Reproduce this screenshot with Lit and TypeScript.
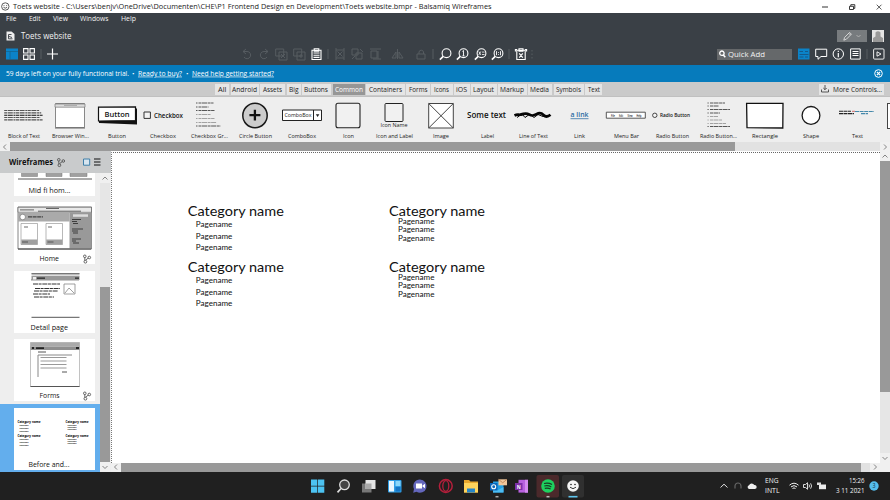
import { LitElement, html, svg, css } from "lit";
import { customElement } from "lit/decorators.js";

// Single line of text set to an exact width.
const line = (s: string, w: number, size: number, cls = "") => html`<svg class="line ${cls}" width=${w} height=${Math.ceil(size * 1.3)}><text x="0" y=${size} font-size=${size} textLength=${w} lengthAdjust="spacingAndGlyphs">${s}</text></svg>`;

const st = (s: string, x: number, y: number, w: number, size: number, fill = "#111", extra = "") =>
  svg`<text class=${extra} x=${x} y=${y} font-size=${size} textLength=${w} lengthAdjust="spacingAndGlyphs" fill=${fill}>${s}</text>`;

const icon = (w: number, h: number, body: unknown, cls = "") => html`<svg class="ic ${cls}" width=${w} height=${h} viewBox="0 0 ${w} ${h}">${body}</svg>`;

const TABS: [string, number, number, number][] = [
  ["All", 214.5, 14.5, 8.5], ["Android", 230.5, 28, 25], ["Assets", 260, 25, 19], ["Big", 286.5, 14, 9.5],
  ["Buttons", 301.5, 29.5, 24], ["Common", 333, 31.5, 28], ["Containers", 366, 39, 33], ["Forms", 406, 24, 18.5],
  ["Icons", 431, 21.5, 15], ["iOS", 453.5, 16, 11], ["Layout", 470.5, 26.5, 21], ["Markup", 498, 28.5, 24],
  ["Media", 527.5, 24.5, 19], ["Symbols", 553.5, 30, 25], ["Text", 585, 17, 12],
];

const magnifier = (inner: unknown) => svg`<circle cx="7.5" cy="5.2" r="4.4" fill="none" stroke="#fff" stroke-width="1.1"/><path d="M4.2 8.4L.9 11.6" stroke="#fff" stroke-width="1.6"/>${inner}`;

// Top bar tools: left edge, width, drawing, dimmed flag
const TOOLS: [number, number, unknown, boolean][] = [
  [241, 11, svg`<path d="M5 1L2 3.5L5 6M2 3.5H6A3.6 3.6 0 1 1 3 9" />`, true],
  [259, 11, svg`<path d="M6 1L9 3.5L6 6M9 3.5H5A3.6 3.6 0 1 0 8 9"/>`, true],
  [275, 13, svg`<path d="M.7 1h8v7h-8zM4 4h8v8h-8zM6 6l4 4M10 6l-4 4"/>`, true],
  [293, 13, svg`<path d="M.7 1h8v7h-8zM4 4h8v8h-8zM6 8h4M8 6v4"/>`, true],
  [310.5, 11, svg`<path d="M1 2.2h9v9.3h-9zM3.2 .8h4.6v2.4h-4.6zM2.5 5h6M2.5 7.2h6M2.5 9.4h6" stroke-width="1.1"/>`, false],
  [327, 2, svg`<path d="M1 1v10"/>`, true],
  [334, 12, svg`<path d="M1 1h2M9 1h2M1 11h2M9 11h2M2 2h8v8h-8zM3.5 3.5l5 5M8.5 3.5l-5 5"/>`, true],
  [351, 13, svg`<path d="M1 1h6v6h-6zM5 5h6v6h-6zM1 11l3-3M9 1l3 3"/>`, true],
  [369, 13, svg`<path d="M1 1h11M2 3h6v7h-6zM9 3v8M4 11h8"/>`, true],
  [391, 13, svg`<path d="M6.5 1v10M1 10l4-6v6zM12 10l-4-6v6z"/>`, true],
  [415, 12, svg`<path d="M2 6h8v5h-8zM4 6v-2a2.3 2.3 0 0 1 4.5 0v2"/>`, true],
  [432, 2, svg`<path d="M1 1v10"/>`, true],
  [438.5, 13, magnifier(""), false],
  [456, 13, magnifier(svg`<path d="M7.5 2.5v5.4M6.4 3.4l1.1-.9M6.4 7.9h2.2" stroke-width=".9"/>`), false],
  [473.5, 13, magnifier(svg`<path d="M4.8 3.5l2 3.4M6.8 3.5l-2 3.4M8 6.5h2.5M8 4.1h2.5" stroke-width=".8"/>`), false],
  [490.5, 13, magnifier(svg`<path d="M5.5 3.2v4M9.5 3.2v4M7.5 4v.8M7.5 6v.8" stroke-width=".9"/>`), false],
  [508, 2, svg`<path d="M1 1v10"/>`, true],
  [515, 12, svg`<path d="M1.8 2.2h8.400v9.3h-8.400zM4 .8h4v2.4h-4zM.4 3.500v-2h1.600M11.6 3.500v-2h-1.600M4.200 5.400l3.600 4.2M7.800 5.400l-3.600 4.2" stroke-width="1.1"/>`, false],
  [531, 3, svg`<path d="M1 2v9" stroke-dasharray="1.5 2"/>`, true],
];

const rows = (n: number, x: number, y: number, step: number, w: number[]) =>
  Array.from({ length: n }, (_, i) => svg`<path d="M${x} ${y + i * step}h${w[i % w.length]}" stroke=${i === 2 ? "#111" : "#555"} stroke-width="1.1" stroke-dasharray="3 .6 5 .7 2 .5"/>`);

// Each control is drawn in a 46 x 34 box centred on x = 23; y = 0 is the top of the palette.
const CONTROLS: [string, number, unknown][] = [
  ["Block of Text", 32, svg`${rows(5, 3.2, 13.5, 2.35, [35, 37, 39, 36, 39])}`],
  ["Browser Win...", 37, svg`<path d="M8.5 6.5h29v24h-29z" fill="#fff" stroke="#888"/><path d="M8 7h30v3.2h-30z" fill="#ddd" stroke="#777" stroke-width=".7"/><path d="M8 31h30" stroke="#666"/><path d="M17 8.4h13" stroke="#999" stroke-width=".8"/>`],
  ["Button", 18, svg`<path d="M5 26l38 1.5V12l-2-2-37 .5z" fill="#111"/><path d="M4.5 10.2l37-.4v13.8l-37 .4z" fill="#fff" stroke="#111" stroke-width="1.2"/>${st("Button", 10.5, 19.8, 25, 7.8, "#111", "med")}`],
  ["Checkbox", 26, svg`<path d="M4 15h6.4v6.4h-6.4z" fill="#f4f4f4" stroke="#333" stroke-width="1"/>${st("Checkbox", 14, 20.6, 29, 6.3, "#111", "med")}`],
  ["Checkbox Gr...", 37, svg`${[6, 10, 13.5, 17.5, 21.5, 25.5, 29].map((y, i) => svg`<path d="M10 ${y}h1.5M12.5 ${y}h${[15, 10, 16, 12, 16, 18, 22][i]}" stroke=${i > 2 && i < 6 ? "#999" : "#444"} stroke-width=".9" stroke-dasharray="3 .5 5 .6"/>`)}`],
  ["Circle Button", 33, svg`<circle cx="23" cy="18.5" r="12.2" fill="#ccc" stroke="#181818" stroke-width="1.5"/><path d="M17.4 18.2h11M22.900 12.8v10.8" stroke="#111" stroke-width="2.3"/>`],
  ["ComboBox", 28, svg`<path d="M3.5 13h39v10.5h-39zM34.5 13v10.5" fill="#fff" stroke="#222"/>${st("ComboBox", 5.5, 20, 27, 5.5, "#222")}<path d="M36.8 17.2h3.6l-1.8 2.8z" fill="#222"/>`],
  ["Icon", 11, svg`<rect x="11" y="6.3" width="24" height="24.4" rx="2" fill="#f1f1f1" stroke="#222" stroke-width="1.1"/>`],
  ["Icon and Label", 37, svg`<rect x="14" y="6.5" width="18" height="18" rx="1" fill="#f1f1f1" stroke="#222"/>${st("Icon Name", 9.5, 30, 27, 5.4, "#222")}`],
  ["Image", 16, svg`<path d="M10.7 6.5h24.6v24.5h-24.6zM10.7 6.5l24.6 24.5M35.3 6.5l-24.6 24.5" fill="#fff" stroke="#444"/>`],
  ["Label", 13, svg`${st("Some text", 3, 20.6, 39, 8, "#111", "med")}`],
  ["Line of Text", 29, svg`<path d="M4.5 18.500q2-1 4-.8t5-.8 6 .8 7-.5 7 .8 7-.3" fill="none" stroke="#050505" stroke-width="2.700"/><path d="M7 20.500l5-3.500 3 3.500 5-3.500 4 3.500 4-3 5 2 6-1" stroke="#050505" fill="none"/>`],
  ["Link", 11, svg`${st("a link", 13.5, 20.4, 18, 7.5, "#2c6ca3", "und med")}`],
  ["Menu Bar", 25, svg`<path d="M3.3 15.2h39v6h-39z" fill="#fff" stroke="#444" stroke-width=".9"/>${st("File", 8, 19.5, 4, 3.4, "#111", "med")}${st("Edit", 16, 19.5, 4, 3.4, "#111", "med")}${st("View", 24.5, 19.5, 5, 3.4, "#111", "med")}${st("Help", 33.5, 19.5, 5, 3.4, "#111", "med")}`],
  ["Radio Button", 33, svg`<circle cx="5.8" cy="18.3" r="2.2" fill="#f4f4f4" stroke="#333" stroke-width=".9"/>${st("Radio Button", 11, 20.4, 30, 5.5, "#111", "med")}`],
  ["Radio Button...", 37, svg`${[6, 9, 12.5, 16, 19.5, 23, 26.5, 29.5].map((y, i) => svg`<path d="M11.5 ${y}h1.2M14 ${y}h${[15, 9, 20, 10, 8, 12, 16, 20][i]}" stroke=${i > 3 && i < 7 ? "#999" : "#444"} stroke-width=".9" stroke-dasharray="3 .5 5 .6"/>`)}`],
  ["Rectangle", 26, svg`<path d="M4.6 6.4l36.4-.1-.2 24.7-35.8-.3z" fill="#fff" stroke="#111" stroke-width="1.3"/>`],
  ["Shape", 16, svg`<circle cx="23" cy="18.4" r="8.9" fill="#fff" stroke="#181818" stroke-width="1.3"/>`],
  ["Text", 11, svg`<path d="M4 14.3h12M4 16.6h15" stroke="#222" stroke-width="1.1" stroke-dasharray="4 .5"/><path d="M17 14.3h3" stroke="#c66" stroke-width="1"/><path d="M20 14.5h19M26 16.6h7" stroke="#48a" stroke-width="1.1" stroke-dasharray="4 .6"/>`],
];

const prototype = svg`<g fill="none" stroke="#444" stroke-width=".8"><circle cx="1.8" cy="1.8" r="1.3"/><circle cx="6.3" cy="3" r="1.3"/><circle cx="2.4" cy="7.2" r="1.4"/><path d="M1.8 3.1v2.8M2.6 5.6l2.7-2"/></g>`;

const PAGES: { name: string; x: number; w: number; linked?: boolean; picked?: boolean; art: unknown }[] = [
  { name: "Mid fi hom...", x: 14.5, w: 42, art: svg`<path d="M4 45h74" stroke="#444" stroke-width=".9"/><path d="M7.5 36h16v6.500h-16zM32 36h16v6.500h-16zM56 36h17v6.500h-17z" fill="#a0a0a0" stroke="#777" stroke-width=".5"/>` },
  {
    name: "Home", x: 25.5, w: 19.5, linked: true, art: svg`<path d="M4 5h73.5v42H4z" fill="#fff" stroke="#666" stroke-width=".8"/><path d="M4 5.3h73.5v5H4z" fill="#e8e8e8" stroke="#555" stroke-width=".6"/><path d="M6 7.9h14M32 6.5h13M24 9.2h43" stroke="#444" stroke-width=".8"/><path d="M4 10.4h51.500v9H4z" fill="#aaa"/><path d="M55.5 10.4h22v36h-22z" fill="#999"/><circle cx="8.7" cy="15" r="2.8" fill="#fff" stroke="#777" stroke-width=".7"/><path d="M14 14.9h15" stroke="#444" stroke-width="1.3" stroke-dasharray="4 .6"/>
      <path d="M7 21.500h16.500v21H7zM32 21.500h16.500v21H32z" fill="#fff" stroke="#888" stroke-width=".6"/><path d="M7.300 37.500h16v5h-16zM32.300 37.500h16v5h-16z" fill="#a0a0a0"/><path d="M8 40h6M33.500 40h6M10 25h4M34 25h4" stroke="#444" stroke-width=".8"/><path d="M59 12.300h15v2.500H59z" fill="#ddd"/><path d="M58 17.500h9M58 19.500h5M58 27h11M58 29h6M58 37h9M58 39h4M59 21.500h5M59 31h5M59 41h6" stroke="#333" stroke-width=".9"/><path d="M4 47h73" stroke="#444"/>`,
  },
  { name: "Detail page", x: 16.5, w: 37.5, art: svg`<path d="M17.500 2.500h48v2h-48z" fill="#bbb"/><path d="M17.500 2.500h48M17 8.900h48" stroke="#777"/><path d="M17.500 5h48v4h-48z" fill="#999"/><path d="M19 6h3v2.500h-3z" fill="#eee"/><path d="M23 7.200h8M61 7.200h4" stroke="#222" stroke-width="1.300"/><path d="M19 13h27M21 17.500h25M20 20h24M19 23h17M20 26h20" stroke="#333" stroke-width="1" stroke-dasharray="5 .6 3 .7"/><path d="M50 13h11v10H50zM51 22l4-5 5 5" fill="#fff" stroke="#777" stroke-width=".7"/><path d="M17.500 46.300h48" stroke="#555"/>` },
  { name: "Forms", x: 25.5, w: 20, linked: true, art: svg`<path d="M16.500 3.500h49v44h-49z" fill="#fff" stroke="#999" stroke-width=".6"/><path d="M16.500 3.500h49v4h-49z" fill="#aaa"/><path d="M16.500 7.500h49v3.500h-49z" fill="#8f8f8f"/><path d="M22 9.200h8M62 9h3M18 9h2" stroke="#222" stroke-width="1.800"/><path d="M24 13h8" stroke="#555"/><path d="M24 38V16h34" fill="none" stroke="#888"/><path d="M26.500 18.500h26M26.500 22h26M26.500 25.500h26M26.500 29h26" stroke="#999"/><path d="M48 33h5M16.500 47.500h49" stroke="#555"/>` },
  {
    name: "Before and...", x: 14.5, w: 41, picked: true, art: svg`${[0, 14].map((dy) => [0, 48].map((dx) => svg`${st("Category name", 3.5 + dx, 15 + dy, 23, 3.2, "#000", "bold")}${[0, 1, 2].map((i) => st("Pagename", 5.5 + dx, (dx ? 17.7 : 18.4) + dy + i * (dx ? 2.3 : 2.8), 9, 1.8, "#111", "bold"))}`))}` },
];

const arrow = (d: string) => html`<span class="arr"><svg width="8" height="8" viewBox="0 0 8 8"><path d=${d} fill="none" stroke="#777" stroke-width=".9"/></svg></span>`;
const UP = "M1.500 5.500L4 3L6.500 5.500", DOWN = "M1.500 3L4 5.500L6.500 3", LEFT = "M5 1.500L2.500 4L5 6.500", RIGHT = "M3 1.500L5.500 4L3 6.500";

@customElement("page-card")
class PageCard extends LitElement {
  static properties = { page: { attribute: false } };
  declare page: (typeof PAGES)[number];
  static styles = css`
    :host { display: block; flex: none; }
    .card { background: #fff; width: 81px; height: 62px; display: block; font-family: "Open Sans", sans-serif; }
    .bold { font-weight: 700; }
  `;
  render() {
    const p = this.page;
    return html`<svg class="card" viewBox="0 0 81 62">${p.art}${st(p.name, p.x, 59, p.w, 7.3)}${p.linked ? svg`<g transform="translate(69 52.500)">${prototype}</g>` : ""}</svg>`;
  }
}

@customElement("app-root")
class AppRoot extends LitElement {
  static styles = css`
    :host { display: flex; flex-direction: column; width: 890px; height: 500px; overflow: hidden; font-family: "Open Sans", "Noto Sans", sans-serif; background: #fff; }
    svg { display: block; flex: none; overflow: visible; }
    .line { fill: currentColor; }
    .med { font-weight: 600; }
    .bold { font-weight: 700; }
    .und { text-decoration: underline; }
    .row { display: flex; align-items: center; }
    .grow { flex: 1; }
    .title { height: 13px; flex: none; color: #222; padding: 0 8px 0 1px; gap: 3px; box-sizing: border-box; }
    .winbtns { gap: 19px; margin-right: -1px; }
    .head { background: #3a4046; color: #f2f2f2; height: 52px; flex: none; }
    .menu { height: 11px; padding-left: 5.500px; gap: 12.500px; }
    .doc { height: 22px; padding: 2px 6px 0 6px; box-sizing: border-box; }
    .doc > .line { margin-left: 6px; }
    .pen { background: #777b7e; width: 30px; height: 12px; display: flex; align-items: center; justify-content: center; gap: 4px; margin-right: 5px; }
    .tools { height: 16px; padding: 0 5.500px 0 6px; }
    .tools .ic { fill: none; stroke: #fff; }
    .tools .dim { stroke: #565c61; }
    .quick { background: #65686a; width: 75px; height: 11px; display: flex; align-items: center; gap: 3px; padding-left: 2px; box-sizing: border-box; margin-right: 6px; }
    .trial { background: #067bbc; color: #fff; height: 17px; flex: none; padding: 0 7px 0 5.500px; }
    .trial .gap { margin: 0 3.700px; }
    .tabs { height: 14px; flex: none; background: #cacaca; padding: 0 6px 0 214.500px; border-bottom: 1px solid #c0c0c0; color: #222; }
    .tab { height: 11px; background: #e5e5e5; display: flex; align-items: center; justify-content: center; }
    .tab.on { background: #969696; color: #fff; }
    .more { width: 65px; gap: 4px; }
    .palette { height: 45px; flex: none; background: #eee; display: grid; grid-template-columns: repeat(19, 46.330px) 9px; padding-left: .7px; overflow: hidden; color: #222; }
    .ctl { display: flex; flex-direction: column; align-items: center; }
    .next { border: 1px solid #444; background: #fff; height: 24px; width: 10px; margin: 6px 0 0 6px; }
    .arr { width: 10px; height: 10px; display: flex; align-items: center; justify-content: center; background: #f0f0f0; flex: none; }
    .hbar { height: 9px; flex: none; display: flex; align-items: center; background: #e2e2e2; overflow: hidden; }
    .thumb { background: #999; }
    .hbar .thumb { height: 9px; }
    .w1 { width: 725px; } .w2 { width: 740px; }
    .main { flex: 1; min-height: 0; display: flex; }
    .side { width: 111px; display: flex; flex-direction: column; background: #eee; overflow: hidden; }
    .sidehead { height: 22px; flex: none; background: #c9cbcc; padding: 0 10px 0 9px; color: #111; }
    .sidebody { flex: 1; min-height: 0; display: flex; }
    .list { width: 100px; display: flex; flex-direction: column; justify-content: flex-end; overflow: hidden; }
    .slot { padding: 3.200px 0 3.200px 14px; }
    .slot.on { background: #63aeed; padding-bottom: 2px; }
    .vbar { width: 10px; display: flex; flex-direction: column; background: #e6e6e6; }
    .t-side { height: 175px; margin-top: 104px; }
    .t-main { height: 231px; }
    .work { flex: 1; display: flex; flex-direction: column; min-width: 0; }
    .stage { flex: 1; min-height: 0; display: flex; }
    .canvas { flex: 1; border-left: 1px dotted #777; border-top: 1px dotted #666; margin-top: 1px; font-family: Lato, "Open Sans", sans-serif; background: #fff; }
    .task { height: 28.500px; flex: none; background: #202020; color: #f2f2f2; padding: 0 11px 0 305px; }
    .app { height: 28px; display: flex; align-items: center; justify-content: center; }
    .stack { display: flex; flex-direction: column; align-items: center; gap: 1px; }
    .end { align-items: flex-end; margin: 0 4.500px 0 10px; }
  `;

  private tools() {
    let pos = 6;
    const at = (x: number, w: number, body: unknown, dim: boolean) => {
      const gap = x - pos;
      pos = x + w;
      return html`<span style="width:${gap}px"></span>${icon(w, 12, body, dim ? "dim" : "")}`;
    };
    return html`
      ${at(6, 12, svg`<path d="M0 .5h12v11h-12z" fill="#0b83c8" stroke="none"/><path d="M0 3.500h12M4 3.500v8" stroke="#14648f" stroke-width=".8"/>`, false)}
      ${at(23, 12, svg`<path d="M.6 .6h4.400v4.400h-4.400zM7 .6h4.400v4.400h-4.400zM.6 7h4.400v4.400h-4.400zM7 7h4.400v4.400h-4.400z" stroke-width="1.100"/>`, false)}
      ${at(39.500, 2, svg`<path d="M1 1v10"/>`, true)}
      ${at(47, 11, svg`<path d="M5.500 .5v11M0 6h11" stroke-width="1.200"/>`, false)}
      ${TOOLS.map(([x, w, b, d]) => at(x, w, b, d))}`;
  }

  private tabs() {
    let pos = 214.5;
    return TABS.map(([name, x, w, tw]) => {
      const gap = x - pos;
      pos = x + w;
      return html`<span style="width:${gap}px"></span><span class="tab ${name === "Common" ? "on" : ""}" style="width:${w}px">${line(name, tw, 6.6)}</span>`;
    });
  }

  private canvas() {
    const group = (x: number, y: number, offs: number[], ix: number) => svg`${st("Category name", x, y, 96, 13.5, "#111")}${offs.map((o) => st("Pagename", x + ix, y + o, 36.5, 7.2, "#111"))}`;
    const loose = [10.8, 22.8, 34.3], tight = [8, 16.3, 25.3];
    return html`<svg width="768" height="300">${group(75.8, 62.8, loose, 8)}${group(75.8, 118.8, loose, 8)}${group(277, 62.8, tight, 9)}${group(277, 118.8, tight, 9)}</svg>`;
  }

  private apps() {
    const list = [
      svg`<path d="M6 7.500h6.300v6.300H6zM13 7.500h6.300v6.300H13zM6 14.500h6.300v6.300H6zM13 14.500h6.300v6.300H13z" fill="#4cc2f1"/>`,
      svg`<circle cx="13.500" cy="12.800" r="4.800" fill="#444" stroke="#ddd" stroke-width="1.300"/><path d="M10 16.500l-3.500 3.800" stroke="#ddd" stroke-width="1.700"/>`,
      svg`<path d="M6 11.500h9.500v9H6z" fill="#777"/><path d="M9.500 8h10v9h-10z" fill="#e6e6e6"/><path d="M9.500 11.500h6v5.500h-6z" fill="#aaa"/>`,
      svg`<rect x="6" y="8" width="13.500" height="12.500" rx="1" fill="#2f9ee5"/><path d="M7 9h5v10.500H7z" fill="#eaf7ff"/><path d="M13.500 9h5v5h-5z" fill="#8ad6fa"/><path d="M13.500 15h5v4.500h-5z" fill="#1475c5"/>`,
      svg`<path d="M13 7.500a6.600 6.600 0 1 1-3.500 12.200l-3.300 1 .8-3.600A6.600 6.600 0 0 1 13 7.500z" fill="#6467bd"/><path d="M9 11.500h6v5H9zM15.500 13.500l2.500-1.800v4.600l-2.500-1.800z" fill="#fff"/>`,
      svg`<circle cx="12.800" cy="14" r="6.400" fill="none" stroke="#b51f3b" stroke-width="1.500"/><ellipse cx="12.800" cy="14" rx="3" ry="5.300" fill="none" stroke="#b51f3b" stroke-width="1.300"/>`,
      svg`<path d="M6 8h5l1.500 1.500H20v11H6z" fill="#e8a72c"/><path d="M6 11h14v9.500H6z" fill="#ffd45c"/><path d="M9 16.500h8v4H9z" fill="#2685c8"/>`,
      svg`<path d="M9 9.500h10.500v11H9z" fill="#239ee2"/><path d="M9 16l5 2 5.500-3v5.500H9z" fill="#4cbcf2"/><path d="M6 11h7.500v7.500H6z" fill="#0a66b8"/><circle cx="9.700" cy="14.700" r="2" fill="none" stroke="#fff" stroke-width="1.100"/><path d="M14.500 7.300h8.500v6h-8.500z" fill="#f0c69a"/><path d="M14.500 7.300l4.200 3.500L23 7.300" fill="none" stroke="#b67d51" stroke-width=".8"/><path d="M11.500 24.700h3" stroke="#aaa" stroke-width="1.500"/>`,
      svg`<path d="M9.500 7.800h9.500v12.800H9.500z" fill="#b960df"/><path d="M16 7.800h3v12.800h-3z" fill="#d58af0"/><path d="M6 11h7.500v7H6z" fill="#7d2fa8"/>${st("N", 7.700, 16.900, 4, 5.500, "#fff", "bold")}`,
      svg`<rect x="1.500" y="3" width="22.500" height="22.500" rx="2" fill="#4b292b"/><circle cx="13" cy="14" r="6.800" fill="#1ed05f"/><path d="M9 11.500q4.500-1 8 1M9.300 14q4-.9 7 .9M9.800 16.400q3.500-.7 5.800.7" fill="none" stroke="#173c23" stroke-width="1.200"/><path d="M11.500 24.700h3" stroke="#bbb" stroke-width="1.500"/>`,
      svg`<rect x="2" y="3" width="22" height="22.500" rx="2" fill="#303030"/><circle cx="13" cy="14" r="5.800" fill="#f5f5f5"/><circle cx="11" cy="12.500" r=".8" fill="#222"/><circle cx="15" cy="12.500" r=".8" fill="#222"/><path d="M10 15.200q3 3 6 0" stroke="#222" fill="none" stroke-width=".9"/><path d="M8.500 24.700h9" stroke="#60c6ee" stroke-width="1.600"/>`,
    ];
    return list.map((a) => html`<span class="app">${icon(25.5, 28, a)}</span>`);
  }

  render() {
    return html`
      <div class="row title">
        ${icon(9, 9, svg`<circle cx="4.300" cy="4.500" r="3.700" fill="#fff" stroke="#333" stroke-width=".8"/><path d="M2.500 5.300q1.800 1.800 3.600 0M3 3.200v.9M5.600 3.200v.9" fill="none" stroke="#333" stroke-width=".8"/>`)}
        ${line("Toets website - C:\\Users\\benjv\\OneDrive\\Documenten\\CHE\\P1 Frontend Design en Development\\Toets website.bmpr - Balsamiq Wireframes", 478.5, 6.6)}
        <span class="grow"></span>
        <span class="row winbtns">
          ${icon(8, 8, svg`<path d="M1 4h6" stroke="#333"/>`)}
          ${icon(8, 8, svg`<path d="M1.500 3.300h4v3.200h-4zM2.800 3v-1.300h4v3.700h-1.300" fill="none" stroke="#222" stroke-width=".9"/>`)}
          ${icon(8, 8, svg`<path d="M1.700 1.700l4.800 4.800M6.500 1.700l-4.800 4.800" stroke="#333" stroke-width=".8"/>`)}
        </span>
      </div>
      <div class="head">
        <div class="row menu">${line("File", 10.5, 6.6)}${line("Edit", 11.5, 6.6)}${line("View", 15, 6.6)}${line("Windows", 28.5, 6.6)}${line("Help", 15, 6.6)}</div>
        <div class="row doc">
          ${icon(9, 10, svg`<path d="M.5 .5h5l3 2.500v6.500h-8z" fill="#eee"/><path d="M2.500 3.500h3M2.500 5.300l3.500 1.200M2.500 7.800h4M2.500 3.500v4.300" stroke="#3a4046" stroke-width=".9"/>`)}
          ${line("Toets website", 50.5, 8.3)}
          <span class="grow"></span>
          <span class="pen">${icon(9, 9, svg`<path d="M.8 8.200l.8-2.800 5-5 1.800 1.800-5 5zM5.800 1.300l1.800 1.800" fill="none" stroke="#ddd" stroke-width=".9"/>`)}${icon(5, 4, svg`<path d="M.5 1l2 2 2-2" fill="none" stroke="#bbb" stroke-width=".8"/>`)}</span>
          ${icon(12, 12, svg`<path d="M0 0h12v12H0z" fill="#e4e4e4"/><path d="M3.500 2.500q2.500-2.500 5 0v4l2.500 1.500V12H1V8l2.500-1.500z" fill="#999"/>`)}
        </div>
        <div class="row tools">
          ${this.tools()}
          <span class="grow"></span>
          <span class="quick">${icon(6.5, 8, svg`<circle cx="2.900" cy="3.200" r="2.200" stroke-width="1.300"/><path d="M4.300 5l2 2.300" stroke-width="1.500"/>`)}${line("Quick Add", 37, 8)}</span>
          ${icon(12, 12, svg`<path d="M0 .5h11.500v11H0z" fill="#0b83c8" stroke="none"/><path d="M1.500 3.500h3.500M7 3.500h3M1.500 6.500h9M1.500 9h4M7 9h3" stroke="#14598a"/>`)}
          <span style="width:5px"></span>
          ${icon(12, 12, svg`<path d="M.7 1.200h11v7.300H6l-3 2.800V8.500H.7z" stroke-width="1"/>`)}
          <span style="width:5px"></span>
          ${icon(12, 12, svg`<circle cx="6.300" cy="6" r="5.200"/><path d="M6.300 5v4.300M6.300 2.800v1.200" stroke-width="1.200"/>`)}
          <span style="width:6px"></span>
          ${icon(11, 12, svg`<path d="M.6 .9h9.600v10.200H.6zM2.500 3.500h6M2.500 5.500h6M2.500 7.500h6"/>`)}
          <span style="width:5px"></span>
          ${icon(2, 12, svg`<path d="M1 1v10"/>`, "dim")}
          <span style="width:5.5px"></span>
          ${icon(11.5, 12, svg`<rect x=".6" y=".9" width="10.400" height="10.200" rx="1" stroke-width=".9"/><path d="M4 3.800l4 2.200-4 2.200z" stroke-width=".9"/>`)}
        </div>
      </div>
      <div class="row trial">
        ${line("59 days left on your fully functional trial.", 123, 6.6)}<span class="gap">${line("•", 2.5, 6)}</span>
        ${line("Ready to buy?", 44, 6.6, "und")}<span class="gap">${line("•", 2.5, 6)}</span>${line("Need help getting started?", 82, 6.6, "und")}
        <span class="grow"></span>
        ${icon(9, 9, svg`<circle cx="4.500" cy="4.500" r="3.800" fill="none" stroke="#fff"/><path d="M2.900 2.900l3.200 3.200M6.100 2.900l-3.200 3.200" stroke="#fff" stroke-width="1.200"/>`)}
      </div>
      <div class="row tabs">${this.tabs()}<span class="grow"></span>
        <span class="tab more">${icon(8, 8, svg`<path d="M4 0v4.500M2.300 3L4 4.700 5.700 3M.5 4.500v2.500h7V4.500" fill="none" stroke="#333" stroke-width=".8"/>`)}${line("More Controls...", 49, 6.6)}</span>
      </div>
      <div class="palette">
        ${CONTROLS.map(([n, w, art]) => html`<div class="ctl">${icon(46, 34.5, art)}${line(n, w, 6)}</div>`)}
        <div class="next"></div>
      </div>
      <div class="hbar">${arrow(LEFT)}<span class="thumb w1"></span><span class="grow"></span>${arrow(RIGHT)}</div>
      <div class="main">
        <div class="side">
          <div class="row sidehead">${line("Wireframes", 44, 8, "bold")}<span style="width:4px"></span>${icon(8, 9, prototype)}<span class="grow"></span>
            ${icon(7, 8, svg`<path d="M.5 1h6.200v6.200H.5z" fill="#d7e5ef" stroke="#3f7fa9"/>`)}<span style="width:4px"></span>${icon(7, 8, svg`<path d="M0 1h6.500M0 4h6.500M0 7h6.500" stroke="#111" stroke-width="1.200"/>`)}</div>
          <div class="sidebody">
            <div class="list">${PAGES.map((p) => html`<div class="slot ${p.picked ? "on" : ""}"><page-card .page=${p}></page-card></div>`)}</div>
            <div class="vbar">${arrow(UP)}<span class="thumb t-side"></span>${arrow(DOWN)}</div>
          </div>
        </div>
        <div class="work">
          <div class="stage"><div class="canvas">${this.canvas()}</div><div class="vbar">${arrow(UP)}<span class="thumb t-main"></span><span class="grow"></span>${arrow(DOWN)}</div></div>
          <div class="hbar">${arrow(LEFT)}<span class="thumb w2"></span><span class="grow"></span>${arrow(RIGHT)}<span class="arr"></span></div>
        </div>
      </div>
      <div class="row task">
        ${this.apps()}
        <span class="grow"></span>
        ${icon(8, 8, svg`<path d="M.5 5.500L4 2.200l3.500 3.300" fill="none" stroke="#ddd"/>`)}<span style="width:6px"></span>
        ${icon(8, 8, svg`<path d="M1 6.500V4a3 3 0 0 1 6 0v2.500" fill="none" stroke="#666" stroke-width="1.200"/>`)}<span style="width:5px"></span>
        ${icon(10, 8, svg`<path d="M2 7a2 2 0 0 1 0-3.800A3 3 0 0 1 7.300 3 2 2 0 0 1 8 7z" fill="#eee"/>`)}<span style="width:8px"></span>
        <span class="stack">${line("ENG", 13.5, 6.6)}${line("INTL", 14.5, 6.6)}</span><span style="width:10px"></span>
        ${icon(10, 8, svg`<path d="M.5 3.200q4.500-4 9 0M2 4.900q3-2.600 6 0M3.500 6.500q1.500-1.200 3 0" fill="none" stroke="#eee" stroke-width="1"/>`)}<span style="width:4px"></span>
        ${icon(10, 8, svg`<path d="M.5 2.500h2l2-1.800v6.600l-2-1.800h-2zM6 2.500q1 1.500 0 3M7.600 1.300q2 2.700 0 5.400" fill="none" stroke="#eee" stroke-width=".9"/>`)}<span style="width:4px"></span>
        ${icon(9, 8, svg`<path d="M2 2.500h7v4.700H2z" fill="#eee"/><path d="M0 .5h4v2.500H0z" fill="#ddd"/>`)}
        <span class="stack end">${line("15:26", 15.5, 6.6)}${line("3 11 2021", 28.5, 6.6)}</span>
        ${icon(10, 10, svg`<circle cx="5" cy="5" r="4.700" fill="#55bdec"/>${st("3", 3.500, 7.400, 3, 6.300, "#12303f")}`)}
      </div>`;
  }
}
